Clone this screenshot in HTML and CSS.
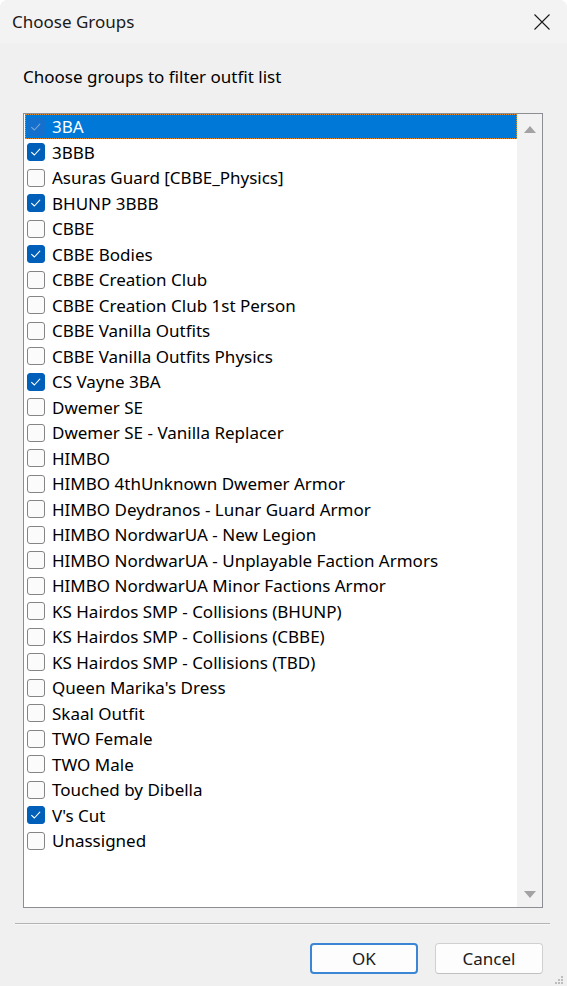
FILE: index.html
```html
<!DOCTYPE html>
<html lang="en">
<head>
<meta charset="utf-8">
<title>Choose Groups</title>
<link rel="stylesheet" href="styles.css">
</head>
<body>
<div class="window">
  <header class="titlebar">
    <span class="title">Choose Groups</span>
    <button class="close" aria-label="Close">
      <svg width="16" height="16" viewBox="0 0 16 16"><path d="M0.5 0.5 L15.5 15.5 M15.5 0.5 L0.5 15.5" stroke="#1a1a1a" stroke-width="1.1" fill="none"/></svg>
    </button>
  </header>

  <main class="content">
    <p class="prompt">Choose groups to filter outfit list</p>

    <div class="listbox">
      <ul class="items">
        <li class="item selected checked"><span class="box"></span>3BA</li>
        <li class="item checked"><span class="box"></span>3BBB</li>
        <li class="item"><span class="box"></span>Asuras Guard [CBBE_Physics]</li>
        <li class="item checked"><span class="box"></span>BHUNP 3BBB</li>
        <li class="item"><span class="box"></span>CBBE</li>
        <li class="item checked"><span class="box"></span>CBBE Bodies</li>
        <li class="item"><span class="box"></span>CBBE Creation Club</li>
        <li class="item"><span class="box"></span>CBBE Creation Club 1st Person</li>
        <li class="item"><span class="box"></span>CBBE Vanilla Outfits</li>
        <li class="item"><span class="box"></span>CBBE Vanilla Outfits Physics</li>
        <li class="item checked"><span class="box"></span>CS Vayne 3BA</li>
        <li class="item"><span class="box"></span>Dwemer SE</li>
        <li class="item"><span class="box"></span>Dwemer SE - Vanilla Replacer</li>
        <li class="item"><span class="box"></span>HIMBO</li>
        <li class="item"><span class="box"></span>HIMBO 4thUnknown Dwemer Armor</li>
        <li class="item"><span class="box"></span>HIMBO Deydranos - Lunar Guard Armor</li>
        <li class="item"><span class="box"></span>HIMBO NordwarUA - New Legion</li>
        <li class="item"><span class="box"></span>HIMBO NordwarUA - Unplayable Faction Armors</li>
        <li class="item"><span class="box"></span>HIMBO NordwarUA Minor Factions Armor</li>
        <li class="item"><span class="box"></span>KS Hairdos SMP - Collisions (BHUNP)</li>
        <li class="item"><span class="box"></span>KS Hairdos SMP - Collisions (CBBE)</li>
        <li class="item"><span class="box"></span>KS Hairdos SMP - Collisions (TBD)</li>
        <li class="item"><span class="box"></span>Queen Marika's Dress</li>
        <li class="item"><span class="box"></span>Skaal Outfit</li>
        <li class="item"><span class="box"></span>TWO Female</li>
        <li class="item"><span class="box"></span>TWO Male</li>
        <li class="item"><span class="box"></span>Touched by Dibella</li>
        <li class="item checked"><span class="box"></span>V's Cut</li>
        <li class="item"><span class="box"></span>Unassigned</li>
      </ul>
      <div class="scrollbar">
        <svg class="arrow" width="12" height="7" viewBox="0 0 12 7"><path d="M0 7 L6 0 L12 7 Z" fill="#a3a3a3"/></svg>
        <svg class="arrow" width="12" height="7" viewBox="0 0 12 7"><path d="M0 0 L6 7 L12 0 Z" fill="#a3a3a3"/></svg>
      </div>
    </div>
  </main>

  <div class="separator"></div>

  <footer class="buttons">
    <button class="btn default">OK</button>
    <button class="btn">Cancel</button>
  </footer>

  <svg class="grip" width="10" height="10" viewBox="0 0 10 10">
    <rect x="7" y="1" width="2" height="2" fill="#bdbdbd"/>
    <rect x="4" y="4" width="2" height="2" fill="#bdbdbd"/>
    <rect x="7" y="4" width="2" height="2" fill="#bdbdbd"/>
    <rect x="1" y="7" width="2" height="2" fill="#bdbdbd"/>
    <rect x="4" y="7" width="2" height="2" fill="#bdbdbd"/>
    <rect x="7" y="7" width="2" height="2" fill="#bdbdbd"/>
  </svg>
</div>
</body>
</html>
```

FILE: styles.css
```css
* {
  box-sizing: border-box;
}

html, body {
  margin: 0;
  padding: 0;
  background: #ffffff;
}

body {
  font-family: "Segoe UI", "Noto Sans", "Liberation Sans", sans-serif;
  font-size: 17px;
  color: #000;
}

.window {
  position: relative;
  width: 567px;
  height: 986px;
  background: #f0f0f0;
  border-radius: 8px 8px 0 0;
  overflow: hidden;
  display: flex;
  flex-direction: column;
}

/* Title bar */
.titlebar {
  height: 43px;
  flex: none;
  background: #f3f3f3;
  display: flex;
  align-items: center;
  justify-content: space-between;
  padding-left: 12px;
}

.title {
  font-size: 17px;
  color: #1a1a1a;
  line-height: 20px;
}

.close {
  width: 46px;
  height: 43px;
  border: 0;
  background: transparent;
  padding: 0;
  display: flex;
  align-items: center;
  justify-content: center;
  margin-right: 2px;
}

/* Dialog body */
.content {
  padding: 0 24px 0 23px;
}

.prompt {
  margin: 24px 0 0;
  line-height: 20px;
  height: 20px;
}

.listbox {
  margin-top: 26px;
  height: 795px;
  border: 1px solid #8d8d94;
  background: #ffffff;
  display: flex;
}

.items {
  list-style: none;
  margin: 0;
  padding: 0 0 0 1px;
  flex: 1;
}

.item {
  height: 25.5px;
  display: flex;
  align-items: center;
  padding-left: 2px;
  white-space: nowrap;
}

.item.selected {
  height: 25px;
  background: #0078d7;
  color: #ffffff;
  outline: 1px dotted #e08a2a;
  outline-offset: -1px;
  margin-bottom: 0.5px;
}

.box {
  width: 18px;
  height: 18px;
  flex: none;
  margin-right: 7px;
  border: 1px solid #858585;
  border-radius: 3px;
  background: #fbfbfb;
}

.checked .box {
  border-color: #005fb8;
  background: #005fb8 url("data:image/svg+xml,%3Csvg xmlns='http://www.w3.org/2000/svg' width='18' height='18' viewBox='0 0 18 18'%3E%3Cpath d='M4.6 9.3 L7.4 12 L12.8 6.2' stroke='%23ffffff' stroke-width='1.1' fill='none' stroke-linecap='round' stroke-linejoin='round'/%3E%3C/svg%3E") center / 18px 18px no-repeat;
}

.selected.checked .box {
  border-color: #1470cc;
  background: #1470cc url("data:image/svg+xml,%3Csvg xmlns='http://www.w3.org/2000/svg' width='18' height='18' viewBox='0 0 18 18'%3E%3Cpath d='M4.6 9.3 L7.4 12 L12.8 6.2' stroke='%2378a6d6' stroke-width='1.1' fill='none' stroke-linecap='round' stroke-linejoin='round'/%3E%3C/svg%3E") center / 18px 18px no-repeat;
}

.scrollbar {
  width: 25px;
  flex: none;
  background: #f2f2f2;
  display: flex;
  flex-direction: column;
  justify-content: space-between;
  align-items: center;
  padding: 12px 0 9px;
}

/* Footer */
.separator {
  height: 2px;
  margin: 15px 17px 0 15px;
  background: #b4b4b4;
  border-bottom: 1px solid #f8f8f8;
}

.buttons {
  display: flex;
  justify-content: flex-end;
  gap: 17px;
  padding: 18px 24px 0 0;
}

.btn {
  font-family: inherit;
  font-size: 17px;
  color: #1a1a1a;
  width: 108px;
  height: 31px;
  border: 1px solid #d0d0d0;
  border-bottom-color: #c0c0c0;
  border-radius: 4px;
  background: #fdfdfd;
  padding: 0;
}

.btn.default {
  border: 2px solid #3a86d4;
}

.grip {
  position: absolute;
  right: 3px;
  bottom: 1px;
}
```
